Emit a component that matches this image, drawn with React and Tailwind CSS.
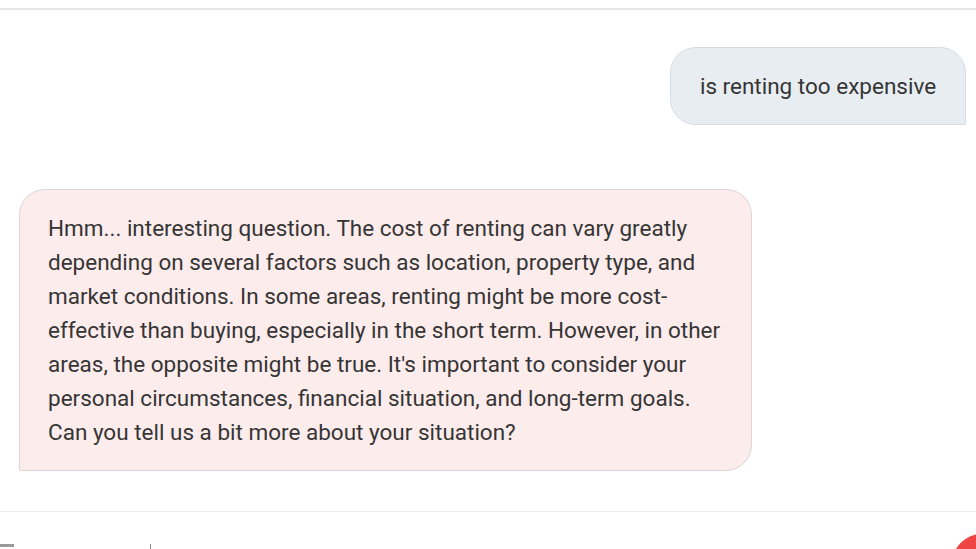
import React from "react";

const botLines = [
  "Hmm... interesting question. The cost of renting can vary greatly",
  "depending on several factors such as location, property type, and",
  "market conditions. In some areas, renting might be more cost-",
  "effective than buying, especially in the short term. However, in other",
  "areas, the opposite might be true. It's important to consider your",
  "personal circumstances, financial situation, and long-term goals.",
  "Can you tell us a bit more about your situation?",
];

const App = () => {
  return (
    <div
      className="relative w-[976px] h-[549px] overflow-hidden bg-white text-[#353535]"
      style={{ fontFamily: "Roboto, 'Noto Sans', sans-serif" }}
    >
      {/* top edge */}
      <div className="h-[8px]" />
      <div className="h-[2px] bg-[#e4e4e4]" />

      {/* conversation */}
      <div className="flex flex-col h-[502px] border-b border-[#ececec]">
        <div className="flex justify-end pr-[10px] pt-[37px]">
          <div className="w-[296px] h-[78px] flex items-center justify-center bg-[#e8edf2] border border-[#d6dbe0] rounded-tl-[26px] rounded-tr-[26px] rounded-bl-[26px] rounded-br-[2px] text-[22.5px] leading-[34px]">
            is renting too expensive
          </div>
        </div>

        <div className="flex pl-[19px] pt-[64px]">
          <div className="w-[733px] bg-[#fdecec] border border-[#dcd6d6] rounded-tl-[26px] rounded-tr-[26px] rounded-br-[26px] rounded-bl-[2px] pl-[28px] pr-[10px] pt-[21px] pb-[21px] text-[22.5px] leading-[34px] whitespace-nowrap">
            {botLines.map((line) => (
              <div key={line}>{line}</div>
            ))}
          </div>
        </div>
      </div>

      {/* input row, cut off by the window */}
      <div className="flex items-end h-[37px]">
        <div className="w-[14px] h-[3px] bg-[#9a9a9a] mb-[2px]" />
        <div className="w-[1px] h-[5px] bg-[#8a8a8a] ml-[136px]" />
      </div>

      {/* send button peeking in */}
      <div className="absolute left-[952px] top-[534px] w-[60px] h-[60px] rounded-full bg-[#ee4444]" />
    </div>
  );
};

export default App;
